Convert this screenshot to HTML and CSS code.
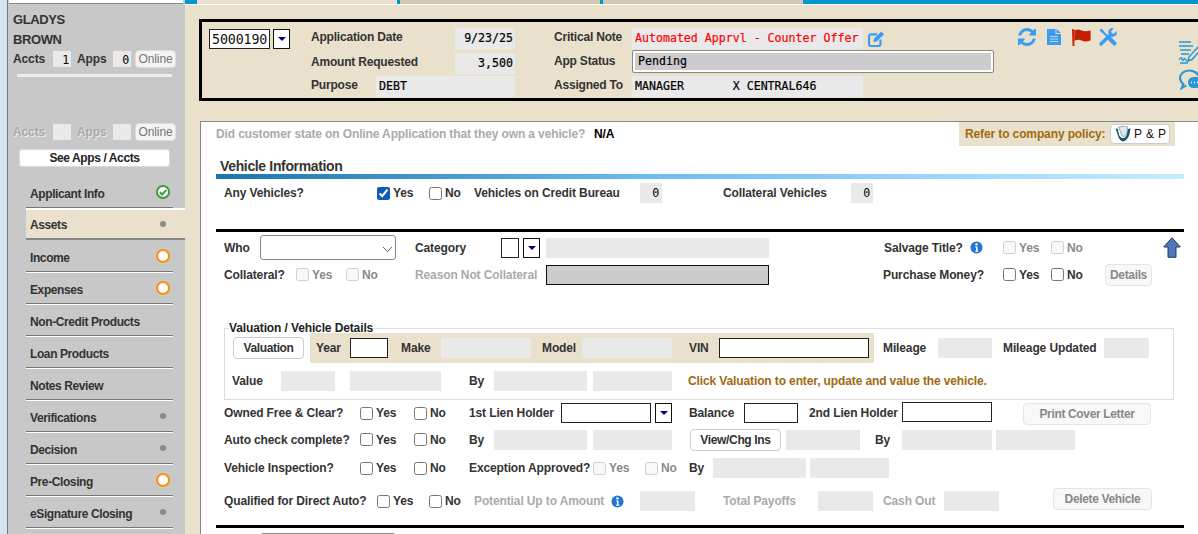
FILE: index.html
```html
<!DOCTYPE html>
<html lang="en">
<head>
    <meta charset="UTF-8">
    <title>Assets - Vehicle Information</title>
    <link rel="stylesheet" href="styles.css">
</head>
<body>
    <div class="edge"></div>

    <div class="sidebar">
        <div class="side-top"></div>
        <div class="cust-name first-name">GLADYS</div>
        <div class="cust-name">BROWN</div>
        <div class="counts">
            <span>Accts</span>
            <div class="count-box">1</div>
            <span>Apps</span>
            <div class="count-box">0</div>
            <button class="online">Online</button>
        </div>
        <div class="side-rule"></div>
        <div class="counts counts-off">
            <span>Accts</span>
            <div class="count-box"></div>
            <span>Apps</span>
            <div class="count-box"></div>
            <button class="online">Online</button>
        </div>
        <button class="see-apps">See Apps / Accts</button>

        <div class="nav">
            <div class="nav-item">Applicant Info
                <svg class="status" viewBox="0 0 14 14"><circle cx="7" cy="7" r="6" fill="#fff" stroke="#3a9c3f" stroke-width="2"/><path d="M3.8 7.2l2.3 2.3 4.2-4.4" fill="none" stroke="#3a9c3f" stroke-width="2"/></svg>
            </div>
            <div class="nav-item active">Assets <span class="status"><i class="dot"></i></span></div>
            <div class="nav-item">Income <span class="status"><i class="ring"></i></span></div>
            <div class="nav-item">Expenses <span class="status"><i class="ring"></i></span></div>
            <div class="nav-item">Non-Credit Products</div>
            <div class="nav-item">Loan Products</div>
            <div class="nav-item">Notes Review</div>
            <div class="nav-item">Verifications <span class="status"><i class="dot"></i></span></div>
            <div class="nav-item">Decision <span class="status"><i class="dot"></i></span></div>
            <div class="nav-item">Pre-Closing <span class="status"><i class="ring"></i></span></div>
            <div class="nav-item">eSignature Closing <span class="status"><i class="dot"></i></span></div>
        </div>
    </div>

    <div class="main">
        <div class="tabs">
            <div class="tab tab-first"></div>
            <div class="tab tab-active"></div>
            <div class="tab tab-a"></div>
            <div class="tab tab-b"></div>
            <div class="tab tab-rest"></div>
        </div>

        <div class="header">
            <div class="hdr-acct">
                <div class="acct-no">5000190</div>
                <div class="drop"></div>
            </div>
            <div class="hdr-col hdr-mid">
                <div class="hdr-row r-date"><span>Application Date</span><div class="val right">9/23/25</div></div>
                <div class="hdr-row r-amt"><span>Amount Requested</span><div class="val right">3,500</div></div>
                <div class="hdr-row r-purpose"><span>Purpose</span><div class="val">DEBT</div></div>
            </div>
            <div class="hdr-col hdr-note">
                <div class="hdr-row r-note">
                    <span>Critical Note</span>
                    <div class="val note-red">Automated Apprvl - Counter Offer</div>
                    <svg class="ic-edit" viewBox="0 0 17 17"><path d="M12.500 9.500v4.200A2 2 0 0 1 10.500 16H3a2 2 0 0 1-2-2V6.300a2 2 0 0 1 2-2H9" fill="none" stroke="#3b9bf3" stroke-width="2.200"/><path d="M6 8.800L13.300 1.500l2.700 2.700-7.300 7.300-3.200.5z" fill="#3b9bf3"/></svg>
                </div>
                <div class="hdr-row r-status"><span>App Status</span><div class="status-box">Pending</div></div>
                <div class="hdr-row r-assigned"><span>Assigned To</span><div class="val">MANAGER       X CENTRAL646</div></div>
            </div>
            <div class="hdr-icons">
                <svg class="ic-refresh" viewBox="0 0 1536 1536"><path fill="#3b9bf3" d="M1511 928q0 5-1 7-64 268-268 434.5t-478 166.5q-146 0-282.5-55t-243.5-157l-129 129q-19 19-45 19t-45-19-19-45v-448q0-26 19-45t45-19h448q26 0 45 19t19 45-19 45l-137 137q71 66 161 102t187 36q134 0 250-65t186-179q11-17 53-117 8-23 30-23h192q13 0 22.5 9.5t9.5 22.5zm25-800v448q0 26-19 45t-45 19h-448q-26 0-45-19t-19-45 19-45l138-138q-148-137-349-137-134 0-250 65t-186 179q-11 17-53 117-8 23-30 23h-199q-13 0-22.5-9.5t-9.5-22.5v-7q65-268 270-434.5t480-166.5q146 0 284 55.5t245 156.5l130-129q19-19 45-19t45 19 19 45z"/></svg>
                <svg class="ic-doc" viewBox="0 0 14 18"><path fill="#3b9bf3" d="M0 1h8.500v5H14v11H0z"/><path fill="#3b9bf3" d="M9.500 1L14 5H9.500z"/><path d="M3 8.500h8M3 11h8M3 13.500h8" stroke="#bcd9f2" stroke-width="1.200"/></svg>
                <svg class="ic-flag" viewBox="0 0 19 18"><path fill="#c41e00" d="M0 1.200h2.400V18H.6z"/><path fill="#c41e00" d="M2.400 2.400c3-1.600 5-1 7.200 0 2.400 1 5 1 9 0v10c-4 1.400-6.600 1.200-9 0-2.200-1-4.200-1-7.200.4z"/></svg>
                <svg class="ic-tools" viewBox="0 0 18 18"><path d="M2 16L11.500 6.500" stroke="#3b9bf3" stroke-width="3.400" stroke-linecap="round"/><path d="M9.200 4.800a4.200 4.200 0 0 1 5.600-4.400l-2.600 2.600.5 2.300 2.300.5 2.600-2.600a4.200 4.200 0 0 1-5.800 5.200z" fill="#3b9bf3"/><path d="M2.500 2.500L15.500 15.500" stroke="#3b9bf3" stroke-width="2"/><path d="M10.500 10.500L15.500 15.500" stroke="#3b9bf3" stroke-width="4" stroke-linecap="round"/><path d="M0.500 2L2 0.500 5 3 3 5z" fill="#3b9bf3"/></svg>
            </div>
            <div class="hdr-side">
                <svg class="ic-sign" viewBox="0 0 20 23"><path d="M0 1h12M0 5h14M1 9h11M2 13h8" stroke="#2a96d6" stroke-width="1.300"/><path d="M9 20l1-4L19 6l3 2.500-9 10z" fill="none" stroke="#2a96d6" stroke-width="1.500"/><path d="M0 19c2-3 3-3 3-1s1 2 2 0 2 3 4 2M1 22h8" fill="none" stroke="#2a96d6" stroke-width="1.300"/></svg>
                <svg class="ic-chat" viewBox="0 0 20 21"><path d="M10 1.500C5 1.500 1 5 1 9c0 2.500 1.300 4.500 3.300 6l-1.500 4 4.500-2.600" fill="none" stroke="#2a96d6" stroke-width="2.200"/><path d="M19 6.500c-.5-2-3.500-5-9-5" fill="none" stroke="#2a96d6" stroke-width="2.200"/><rect x="9" y="8" width="14" height="11" rx="5.500" fill="#2a96d6"/><path d="M12 13.500h1M15 13.500h1M18 13.500h1" stroke="#fff" stroke-width="1.500"/></svg>
            </div>
        </div>

        <div class="panel">
            <div class="row row-intro">
                <span class="off">Did customer state on Online Application that they own a vehicle?</span>
                <span class="strong">N/A</span>
                <div class="policy">
                    <span>Refer to company policy:</span>
                    <button class="btn-policy">
                        <svg class="ic-shield" viewBox="0 0 15 15"><path d="M.5 2l3 9c1 2 3 3.500 4.500 3.500 2-1 4.500-3 5.500-6.500l1-6-2.500 1-1 5.500c-1 2-2 3-3 3S5 11 4 9L2.500 2.500z" fill="#15506e"/><path d="M3.500 1l6.500-1 2 1-1 6-2 3-2.500-1z" fill="#dfe8ee" stroke="#6f8f9f" stroke-width=".7"/></svg>
                        P &amp; P
                    </button>
                </div>
            </div>

            <div class="section-title">Vehicle Information</div>
            <div class="section-bar"></div>

            <div class="row row-any">
                <span>Any Vehicles?</span>
                <label class="opt"><input type="checkbox" checked>Yes</label>
                <label class="opt"><input type="checkbox">No</label>
                <span>Vehicles on Credit Bureau</span>
                <div class="fld f22 num">0</div>
                <span>Collateral Vehicles</span>
                <div class="fld f22 num">0</div>
            </div>

            <div class="black-rule rule-a"></div>

            <div class="row row-who">
                <span>Who</span>
                <select class="who-select"><option></option></select>
                <span>Category</span>
                <input class="inp f18" type="text">
                <div class="drop"></div>
                <div class="fld f223"></div>
                <span>Salvage Title?</span>
                <svg class="ic-info" viewBox="0 0 14 14"><use href="#info"/></svg>
                <label class="opt off"><input type="checkbox" disabled>Yes</label>
                <label class="opt off"><input type="checkbox" disabled>No</label>
                <svg class="ic-up" viewBox="0 0 18 21"><path d="M9 .7L17.300 10H13v10.300H5V10H.7z" fill="#4f78b5" stroke="#1f3a6e"/></svg>
            </div>

            <div class="row row-coll">
                <span>Collateral?</span>
                <label class="opt off"><input type="checkbox" disabled>Yes</label>
                <label class="opt off"><input type="checkbox" disabled>No</label>
                <span class="off">Reason Not Collateral</span>
                <div class="fld-dark"></div>
                <span>Purchase Money?</span>
                <label class="opt"><input type="checkbox">Yes</label>
                <label class="opt"><input type="checkbox">No</label>
                <button class="btn btn-off f47 drop1">Details</button>
            </div>

            <fieldset class="valuation">
                <legend>Valuation / Vehicle Details</legend>
                <div class="row val-top">
                    <button class="btn f71">Valuation</button>
                    <div class="val-strip">
                        <span>Year</span>
                        <input class="inp f38" type="text">
                        <span>Make</span>
                        <div class="fld f90"></div>
                        <span>Model</span>
                        <div class="fld f90"></div>
                        <span>VIN</span>
                        <input class="inp f150" type="text">
                    </div>
                    <span>Mileage</span>
                    <div class="fld f54"></div>
                    <span>Mileage Updated</span>
                    <div class="fld f45"></div>
                </div>
                <div class="row val-bottom">
                    <span>Value</span>
                    <div class="fld f54"></div>
                    <div class="fld f91"></div>
                    <span>By</span>
                    <div class="fld f93"></div>
                    <div class="fld f79"></div>
                    <span class="hint">Click Valuation to enter, update and value the vehicle.</span>
                </div>
            </fieldset>

            <div class="row row-owned">
                <span>Owned Free &amp; Clear?</span>
                <label class="opt"><input type="checkbox">Yes</label>
                <label class="opt"><input type="checkbox">No</label>
                <span>1st Lien Holder</span>
                <input class="inp f90" type="text">
                <div class="drop"></div>
                <span>Balance</span>
                <input class="inp f54" type="text">
                <span>2nd Lien Holder</span>
                <input class="inp f90 drop1" type="text">
                <button class="btn btn-off f128 drop2">Print Cover Letter</button>
            </div>

            <div class="row row-auto">
                <span>Auto check complete?</span>
                <label class="opt"><input type="checkbox">Yes</label>
                <label class="opt"><input type="checkbox">No</label>
                <span>By</span>
                <div class="fld f93"></div>
                <div class="fld f79"></div>
                <button class="btn f91 drop1">View/Chg Ins</button>
                <div class="fld f74"></div>
                <span>By</span>
                <div class="fld f90 drop2"></div>
                <div class="fld f79 drop2"></div>
            </div>

            <div class="row row-insp">
                <span>Vehicle Inspection?</span>
                <label class="opt"><input type="checkbox">Yes</label>
                <label class="opt"><input type="checkbox">No</label>
                <span>Exception Approved?</span>
                <label class="opt off"><input type="checkbox" disabled>Yes</label>
                <label class="opt off"><input type="checkbox" disabled>No</label>
                <span>By</span>
                <div class="fld f93"></div>
                <div class="fld f79"></div>
            </div>

            <div class="row row-qual">
                <span>Qualified for Direct Auto?</span>
                <label class="opt"><input type="checkbox">Yes</label>
                <label class="opt"><input type="checkbox">No</label>
                <span class="off">Potential Up to Amount</span>
                <svg class="ic-info" viewBox="0 0 14 14"><use href="#info"/></svg>
                <div class="fld f55"></div>
                <span class="off">Total Payoffs</span>
                <div class="fld f55"></div>
                <span class="off">Cash Out</span>
                <div class="fld f55"></div>
                <button class="btn btn-off f99 lift3">Delete Vehicle</button>
            </div>

            <div class="black-rule rule-b"></div>
            <select class="who-select next-select"><option></option></select>
        </div>
    </div>

    <svg class="defs" width="0" height="0">
        <defs>
            <g id="info">
                <circle cx="7" cy="7" r="6.500" fill="#1f74d4"/>
                <circle cx="7" cy="3.600" r="1.300" fill="#fff"/>
                <path d="M5.500 6h2.600v4.500h1v1H5.500v-1h1V7h-1z" fill="#fff"/>
            </g>
        </defs>
    </svg>
</body>
</html>
```
FILE: styles.css
```css
* { box-sizing: border-box; }
html, body { margin: 0; height: 534px; overflow: hidden; }
body { display: flex; width: 1198px; font: bold 12px "Liberation Sans", Arial, sans-serif; letter-spacing: -0.12px; color: #333; background: #e9e1cc; }
button { font: inherit; letter-spacing: inherit; padding: 0; cursor: pointer; }
.defs { position: absolute; }

.edge { width: 8px; flex: none; background: #d6e4f2; border-right: 1px solid #777; }

/* left column */
.sidebar { width: 177px; flex: none; background: #c8c8c8; }
.side-top { height: 4px; margin: 0 2px 0 1px; background: #fff; border-bottom: 1px solid #888; }
.cust-name { height: 20px; line-height: 20px; padding-left: 5px; font-size: 13px; letter-spacing: -0.4px; }
.first-name { margin-top: 6px; }
.counts { display: grid; grid-template-columns: 40px 24px 36px 22px 41px; align-items: center; height: 18px; padding-left: 5px; }
.count-box { width: 18px; height: 16px; background: #e9e9e9; font: 11.6px/19px "DejaVu Sans Mono", monospace; color: #000; text-align: right; padding-right: 2px; }
.online { height: 18px; background: #f4f4f4; border: 1px solid #ddd; border-radius: 4px; color: #777; font-weight: normal; }
.side-rule { height: 3px; margin: 6px 13px 0 9px; background: #eee; }
.counts-off { margin-top: 46px; color: #aaa; text-shadow: 1px 1px 0 #eee; }
.counts-off .online { text-shadow: none; }
.see-apps { display: block; width: 151px; height: 18px; margin: 8px 0 0 11px; background: #fff; border: 1px solid #cfdcea; border-radius: 3px; color: #222; letter-spacing: -0.4px; }

.nav { margin-top: 9px; padding-left: 18px; letter-spacing: -0.4px; }
.nav-item { display: flex; justify-content: space-between; align-items: center; width: 147px; height: 32px; padding: 4px 3px 0 4px; border-bottom: 1px solid #777; box-shadow: 0 1px 0 #fff; }
.nav-item.active { width: 159px; padding-top: 2px; padding-right: 15px; background: #e9e1cc; border-top: 2px solid #fff; border-bottom: 2px solid #888; box-shadow: none; }
.status { display: flex; align-items: center; justify-content: center; width: 14px; height: 14px; margin-top: -3px; }
.dot { width: 6px; height: 6px; border-radius: 50%; background: #8c8c8c; }
.ring { width: 14px; height: 14px; border-radius: 50%; background: #fff; border: 2px solid #f7930a; }

/* right column */
.main { width: 1013px; flex: none; overflow: hidden; }
.tabs { display: flex; height: 5px; border-bottom: 1px solid #fff; }
.tab { height: 4px; }
.tab-first { width: 12px; background: #0096cc; margin-right: 2px; }
.tab-active { width: 198px; border-right: 1px solid #fff; }
.tab-a { width: 203px; background: #d2c8b0; border-left: 3px solid #0096cc; }
.tab-b { width: 203px; background: #d2c8b0; border-left: 3px solid #0096cc; }
.tab-rest { flex: 1; background: #0096cc; }

.header { display: flex; width: 1050px; height: 82px; margin: 14px 0 0 14px; padding: 6px 0 0 7px; border: 3px solid #000; }
.hdr-acct { display: flex; align-items: flex-start; gap: 3px; width: 102px; padding-top: 1px; }
.acct-no { width: 61px; height: 20px; background: #fff; border: 1px solid #222; font: 13.3px/20px "DejaVu Sans Mono", monospace; color: #111; padding-left: 2px; }
.drop { position: relative; width: 17px; height: 20px; background: #fff; border: 1px solid #111; }
.drop::after { content: ""; position: absolute; left: 4px; top: 7px; border: 4px solid transparent; border-top-color: #000080; border-bottom: 0; }
.hdr-col { display: flex; flex-direction: column; }
.hdr-mid { width: 243px; letter-spacing: -0.2px; }
.hdr-note { width: 464px; letter-spacing: -0.2px; }
.hdr-row { display: grid; align-items: center; }
.hdr-row span { margin-top: -4px; }
.r-status span { margin-top: -2px; }
.r-date { grid-template-columns: 144px 60px; height: 18px; }
.r-amt { grid-template-columns: 144px 60px; height: 16px; margin-top: 7px; }
.r-purpose { grid-template-columns: 65px 139px; height: 16px; margin-top: 7px; }
.val { height: 100%; padding: 0 2px 0 3px; background: #e9e9e9; font: 11.6px/21px "DejaVu Sans Mono", monospace; letter-spacing: 0; color: #000; white-space: pre; -webkit-text-stroke: 0.2px; }
.right { text-align: right; }
.note-red { color: #f00; }
.r-note { grid-template-columns: 78px 231px 22px; height: 18px; }
.ic-edit { width: 17px; height: 17px; margin-left: 5px; }
.r-status { grid-template-columns: 78px 362px; height: 23px; margin-top: 4px; }
.status-box { height: 23px; padding-left: 5px; background: #ccc; border: 1px solid #888; border-radius: 2px; box-shadow: inset 0 0 0 2px #fff; font: 11.6px/21px "DejaVu Sans Mono", monospace; letter-spacing: 0; color: #000; -webkit-text-stroke: 0.2px; }
.r-assigned { grid-template-columns: 78px 231px; height: 16px; margin-top: 3px; }
.hdr-icons { display: flex; align-items: flex-start; width: 161px; }
.ic-refresh { width: 18px; height: 18px; margin-right: 11px; }
.ic-doc { width: 14px; height: 18px; margin-right: 11px; }
.ic-flag { width: 19px; height: 18px; margin-right: 8px; }
.ic-tools { width: 18px; height: 18px; }
.hdr-side { display: flex; flex-direction: column; gap: 5px; padding-top: 13px; }
.ic-sign { width: 20px; height: 23px; }
.ic-chat { width: 20px; height: 21px; }

.panel { height: 420px; margin: 20px 0 0 15px; padding-left: 15px; background: #fff; border-left: 1px solid #888; border-top: 1px solid #888; }
.row { display: grid; align-items: center; white-space: nowrap; }
.off { color: #aaa; }
.strong { color: #000; }
.opt { display: flex; align-items: center; }
.opt.off { color: #8a8a8a; }
.opt input { width: 13px; height: 13px; margin: 0 3px 0 0; accent-color: #0a5fb4; }

.row-intro { grid-template-columns: 378px 365px 216px; height: 24px; }
.policy { display: grid; grid-template-columns: 145px 60px; align-items: center; height: 24px; padding-left: 6px; background: #e9e1cc; color: #a06a10; }
.btn-policy { display: flex; align-items: center; gap: 3px; height: 20px; padding-left: 4px; background: #fff; border: 1px solid #ccc; border-radius: 4px; color: #111; font-weight: normal; letter-spacing: 0.4px; }
.ic-shield { width: 16px; height: 16px; }

.section-title { height: 28px; padding: 11px 0 0 4px; font-size: 14px; line-height: 18px; letter-spacing: -0.35px; }
.section-bar { width: 968px; height: 5px; background: linear-gradient(to right, #1a74b0, #6cbcf5 45%, #c5ecff); }
.black-rule { width: 968px; height: 3px; background: #000; }
.rule-a { margin-top: 26px; }
.rule-b { margin-top: 14px; }

.fld { height: 20px; background: #e9e9e9; }
.num { font: 11.6px/21px "DejaVu Sans Mono", monospace; color: #000; text-align: right; padding-right: 3px; }
.fld-dark { width: 223px; height: 20px; background: #ccc; border: 1px solid #111; }
.inp { height: 20px; padding: 0; background: #fff; border: 1px solid #222; }
.who-select {
    appearance: none; align-self: start; width: 136px; height: 25px; border: 1px solid #888; border-radius: 3px;
    background-color: #fff;
    background-image: linear-gradient(45deg, transparent 42%, #666 42%, #666 58%, transparent 58%), linear-gradient(-45deg, transparent 42%, #666 42%, #666 58%, transparent 58%);
    background-size: 5px 5px, 5px 5px;
    background-position: 122px 11px, 126px 11px;
    background-repeat: no-repeat;
}
.next-select { display: block; margin: 5px 0 0 44px; }

.f18 { width: 18px; } .f22 { width: 22px; } .f38 { width: 38px; } .f45 { width: 45px; }
.f47 { width: 47px; } .f54 { width: 54px; } .f55 { width: 55px; } .f71 { width: 71px; }
.f74 { width: 74px; } .f79 { width: 79px; } .f90 { width: 90px; } .f91 { width: 91px; }
.f93 { width: 93px; } .f99 { width: 99px; } .f128 { width: 128px; } .f150 { width: 150px; }
.f223 { width: 223px; }

.btn { height: 22px; background: #fff; border: 1px solid #ccc; border-radius: 4px; color: #333; letter-spacing: -0.35px; }
.btn-off { background: #f8f8f8; border-color: #e5e5e5; color: #888; }
.drop1 { align-self: start; margin-top: 1px; }
.drop2 { align-self: start; margin-top: 2px; }
.lift3 { align-self: start; margin-top: -3px; }
.ic-info { width: 13px; height: 13px; }
.ic-up { align-self: start; width: 18px; height: 21px; margin-top: 2px; }

.row-any, .row-who, .row-coll, .row-owned, .row-auto, .row-insp, .row-qual { padding-left: 8px; }
.row-any { grid-template-columns: 153px 52px 45px 166px 83px 128px 22px; height: 20px; margin-top: 4px; }
.row-who { grid-template-columns: 36px 155px 86px 22px 23px 338px 86px 33px 48px 112px 18px; height: 24px; margin-top: 3px; }
.row-coll { grid-template-columns: 72px 50px 69px 131px 337px 120px 48px 54px 47px; height: 20px; margin-top: 4px; }

.valuation { width: 950px; margin: 39px 0 0 8px; padding: 0 0 8px; border: 1px solid #ddd; }
.valuation legend { height: 12px; margin-left: 4px; padding: 0; font-size: 12px; line-height: 12px; color: #222; }
.val-top { grid-template-columns: 77px 573px 55px 65px 101px 45px; height: 30px; margin-top: -1px; padding-left: 8px; }
.val-strip { display: grid; grid-template-columns: 34px 51px 40px 101px 40px 107px 30px 150px; align-items: center; width: 564px; height: 30px; padding-left: 6px; background: #e9e1cc; }
.val-bottom { grid-template-columns: 49px 69px 119px 25px 99px 95px auto; height: 20px; margin-top: 8px; padding-left: 7px; }
.hint { color: #a06a10; }

.row-owned { grid-template-columns: 136px 54px 55px 92px 94px 34px 55px 65px 93px 121px 128px; height: 20px; margin-top: 1px; }
.row-auto { grid-template-columns: 136px 54px 55px 25px 99px 97px 96px 89px 27px 94px 79px; height: 20px; margin-top: 7px; }
.row-insp { grid-template-columns: 136px 54px 55px 124px 52px 44px 24px 97px 79px; height: 20px; margin-top: 10px; }
.row-qual { grid-template-columns: 153px 52px 45px 137px 29px 83px 95px 65px 61px 109px 99px; height: 20px; margin-top: 13px; }
```
